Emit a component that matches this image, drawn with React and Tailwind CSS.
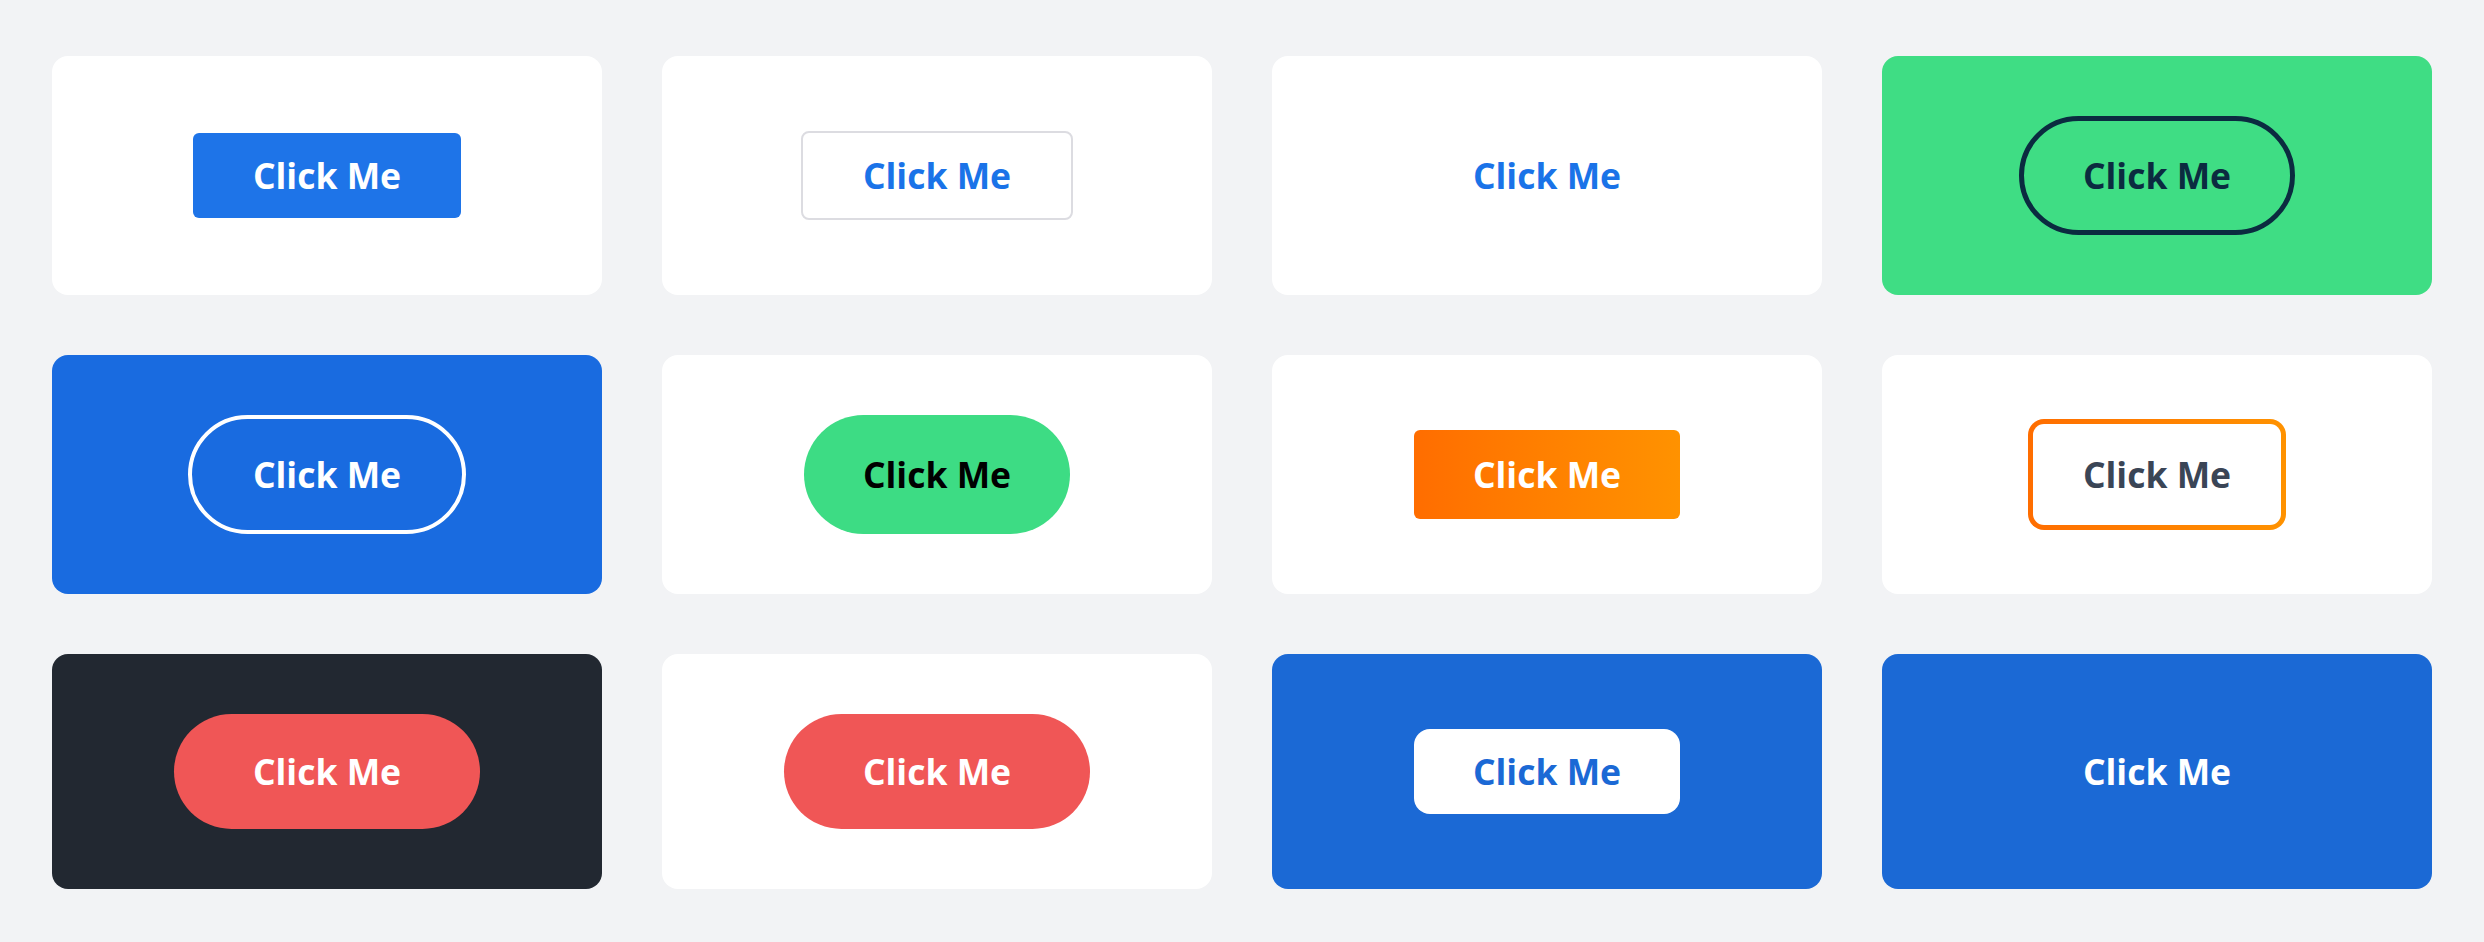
import React from 'react';

const Card = ({ bg = 'bg-white', children }) => (
  <div className={`${bg} rounded-2xl py-[60px] flex items-center justify-center`}>{children}</div>
);

const label = 'text-[35.5px] font-bold leading-[49px] whitespace-nowrap';

export default function App() {
  return (
    <div
      className="min-h-screen bg-[#f2f3f5] px-[52px] pt-[56px] pb-[52px]"
      style={{ fontFamily: '"Open Sans", "Noto Sans", sans-serif' }}
    >
      <div className="grid grid-cols-4 gap-[60px]">
        {/* row 1 */}
        <Card>
          <button className={`${label} bg-[#1e74e8] text-white rounded-md px-[60px] py-[18px]`}>Click Me</button>
        </Card>
        <Card>
          <button className={`${label} bg-white text-[#1a73e8] border-2 border-[#dcdce1] rounded-lg px-[60px] py-[18px]`}>
            Click Me
          </button>
        </Card>
        <Card>
          <button className={`${label} text-[#1a73e8] px-[60px] py-[18px]`}>Click Me</button>
        </Card>
        <Card bg="bg-[#3fdd84]">
          <button className={`${label} text-[#0b2b40] border-[5px] border-[#0b2b40] rounded-full px-[59px] py-[30px]`}>
            Click Me
          </button>
        </Card>

        {/* row 2 */}
        <Card bg="bg-[#196be0]">
          <button className={`${label} text-white border-4 border-white rounded-full px-[61px] py-[31px]`}>Click Me</button>
        </Card>
        <Card>
          <button className={`${label} bg-[#3ddc84] text-black rounded-full px-[59px] py-[35px]`}>Click Me</button>
        </Card>
        <Card>
          <button className={`${label} bg-gradient-to-r from-[#ff6d00] to-[#ff9200] text-white rounded-md px-[59px] py-[20px]`}>
            Click Me
          </button>
        </Card>
        <Card>
          <div className="bg-gradient-to-r from-[#ff6d00] to-[#ff9200] rounded-2xl p-[5px]">
            <button className={`${label} bg-white text-[#3a4556] rounded-[11px] px-[50px] py-[26px] block`}>Click Me</button>
          </div>
        </Card>

        {/* row 3 */}
        <Card bg="bg-[#222831]">
          <button className={`${label} bg-[#f05656] text-white rounded-full px-[79px] py-[33px]`}>Click Me</button>
        </Card>
        <Card>
          <button className={`${label} bg-[#f05656] text-white rounded-full px-[79px] py-[33px]`}>Click Me</button>
        </Card>
        <Card bg="bg-[#1b69d5]">
          <button className={`${label} bg-white text-[#1b69d5] rounded-2xl px-[59px] py-[18px]`}>Click Me</button>
        </Card>
        <Card bg="bg-[#1b69d5]">
          <button className={`${label} text-white px-[60px] py-[18px]`}>Click Me</button>
        </Card>
      </div>
    </div>
  );
}
